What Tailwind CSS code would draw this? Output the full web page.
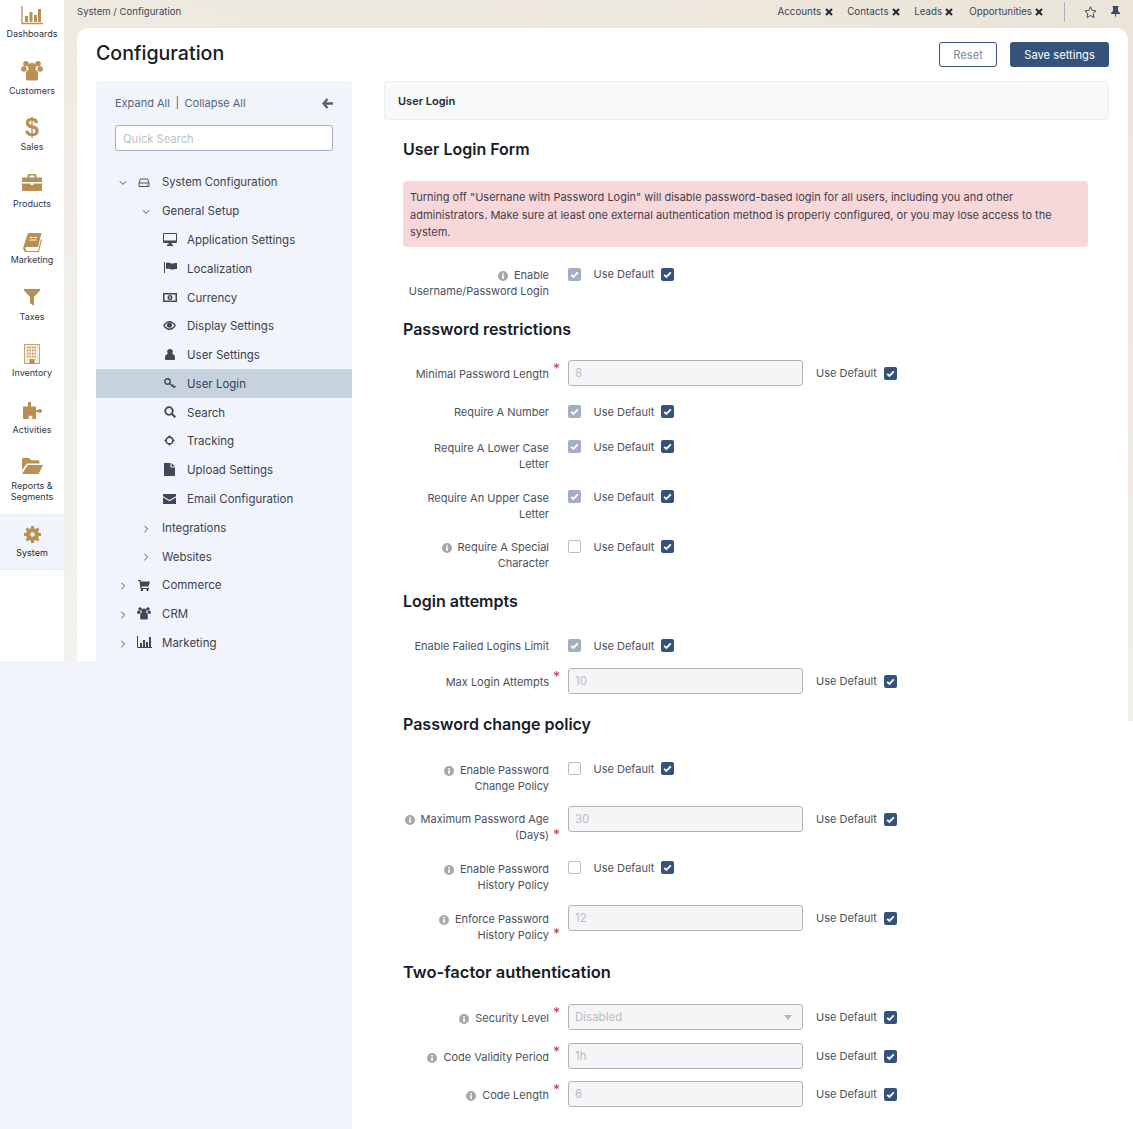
<!DOCTYPE html>
<html lang="en"><head><meta charset="utf-8"><title>Configuration</title>
<script src="https://cdn.jsdelivr.net/npm/@tailwindcss/browser@4"></script></head>
<body>
<svg width="0" height="0" class="absolute">
<symbol id="chk" viewBox="0 0 13 13"><path d="M3.2 6.8l2.2 2.2 4.4-4.6" fill="none" stroke="#fff" stroke-width="1.9"/></symbol>
<symbol id="info" viewBox="0 0 10 10"><circle cx="5" cy="5" r="5" fill="#a8a8a8"/><rect x="4.2" y="4.2" width="1.7" height="3.6" fill="#fff"/><rect x="4.2" y="2" width="1.7" height="1.4" fill="#fff"/></symbol>
<symbol id="x" viewBox="0 0 8 8"><path d="M1 1l6 6M7 1l-6 6" stroke="#222b3a" stroke-width="2.1"/></symbol>
<symbol id="down" viewBox="0 0 8 8"><path d="M.8 2.2L4 5.4l3.2-3.2" fill="none" stroke="#4a5568" stroke-width="1"/></symbol>
<symbol id="right" viewBox="0 0 8 8"><path d="M2.4.8L5.6 4 2.4 7.2" fill="none" stroke="#4a5568" stroke-width="1"/></symbol>
</svg>
<div class="flex w-[1133px] h-[1129px] overflow-hidden bg-[linear-gradient(200deg,#ebe4d8_0%,#f1efe9_45%,#f5f4f1_100%)] font-['Inter','Liberation_Sans',sans-serif] text-[#3d4554]">

<!-- left column -->
<div class="w-[352px] flex flex-col shrink-0">
  <div class="h-[661px] flex">
    <nav class="w-[64px] bg-white flex flex-col items-center text-[9px] leading-[11px] text-[#2f3644] text-center shrink-0">
      <a class="h-[57px] w-full flex flex-col items-center"><span class="h-[28px] flex items-center"><svg class="w-[22px] h-[19px] mt-[2px]" viewBox="0 0 22 19"><path d="M1 0v17.5h21" fill="none" stroke="#b98f52" stroke-width="1.3"/><path d="M4 10h3v6H4zM8.500 6h3v10h-3zM13 9h3v7h-3zM17 3h3v13h-3z" fill="#b98f52"/></svg></span><span>Dashboards</span></a>
      <a class="h-[56px] w-full flex flex-col items-center"><span class="h-[28px] flex items-center"><svg class="w-[22px] h-[20px]" viewBox="0 0 22 20"><g fill="#b98f52"><circle cx="5" cy="2.800" r="2.800"/><circle cx="17" cy="2.800" r="2.800"/><circle cx="2.800" cy="8" r="2.700"/><circle cx="19.200" cy="8" r="2.700"/><circle cx="11" cy="6" r="4"/><path d="M5 12q0-3 3-3h6q3 0 3 3v6q0 1.500-2 1.500H7q-2 0-2-1.500z"/></g></svg></span><span>Customers</span></a>
      <a class="h-[57px] w-full flex flex-col items-center"><span class="h-[28px] flex items-center text-[25px] leading-[26px] font-bold text-[#b98f52] font-['Liberation_Sans',sans-serif]">$</span><span>Sales</span></a>
      <a class="h-[56px] w-full flex flex-col items-center"><span class="h-[28px] flex items-center"><svg class="w-[20px] h-[18px] mb-[2px]" viewBox="0 0 20 18"><path fill="#b98f52" fill-rule="evenodd" d="M6.500 0h7l1 1v2.500H19q1 0 1 1V8H0V4.500q0-1 1-1h4.500V1zM7.500 1.500v2h5v-2zM0 9.500h8.500V11h3V9.500H20V16q0 1-1 1H1q-1 0-1-1z"/></svg></span><span>Products</span></a>
      <a class="h-[57px] w-full flex flex-col items-center"><span class="h-[28px] flex items-center"><svg class="w-[19px] h-[19px] mt-[4px]" viewBox="0 0 19 19"><path fill="#b98f52" d="M5 0h13.500l-3.500 14H3.500q-1.500 0-1 2t2 2H15l3-12 1 1-3.300 12.500H4Q1 19 .2 16 0 15 .5 13.500z"/><path stroke="#fff" stroke-width="1" d="M7 4.500h7M6.500 7h7"/></svg></span><span>Marketing</span></a>
      <a class="h-[56px] w-full flex flex-col items-center"><span class="h-[28px] flex items-center"><svg class="w-[16px] h-[17px]" viewBox="0 0 16 17"><path fill="#b98f52" d="M0 0h16v1.500L10 8v9l-4-3V8L0 1.500z"/></svg></span><span>Taxes</span></a>
      <a class="h-[57px] w-full flex flex-col items-center"><span class="h-[28px] flex items-center"><svg class="w-[16px] h-[20px] mt-[2px]" viewBox="0 0 16 20"><rect x=".5" y=".5" width="15" height="19" fill="#f4ece0" stroke="#c9a573"/><path stroke="#b98f52" stroke-dasharray="1.500 1" stroke-width="1.300" d="M3 3.500h10M3 6.500h10M3 9.500h10M3 12.500h10"/><rect x="5.500" y="15" width="5" height="5" fill="#b98f52"/></svg></span><span>Inventory</span></a>
      <a class="h-[56px] w-full flex flex-col items-center"><span class="h-[28px] flex items-center"><svg class="w-[19px] h-[18px] mt-[2px]" viewBox="0 0 19 18"><path fill="#b98f52" d="M5 0h3v4.500h5V8h2q1-1 2-1 2 0 2 2t-2 2q-1 0-2-1h-2v7H8.500q1-.5 1-2 0-1.500-2-1.500t-2 1.500q0 1.500 1 2H0V4.500h5z"/></svg></span><span>Activities</span></a>
      <a class="h-[62px] w-full flex flex-col items-center"><span class="h-[28px] flex items-center"><svg class="w-[21px] h-[16px]" viewBox="0 0 21 16"><path fill="#b98f52" d="M0 1.500Q0 0 1.500 0H7l2 2.200h7q1.500 0 1.500 1.500V5.500H5L0 12zM5.800 7H21l-4.500 9H0z"/></svg></span><span>Reports &amp;<br>Segments</span></a>
      <a class="h-[56px] w-full bg-[#f1f4fa] border-y border-[#e7eaf0] flex flex-col items-center pt-[4px] text-[#1f2633]"><span class="h-[28px] flex items-center"><svg class="w-[17px] h-[17px] mt-[2px]" viewBox="0 0 17 17"><circle cx="8.500" cy="8.500" r="4.500" fill="none" stroke="#b98f52" stroke-width="4"/><path stroke="#b98f52" stroke-width="3" d="M8.500 0v17M0 8.500h17M2.500 2.500l12 12M14.500 2.500l-12 12"/><circle cx="8.500" cy="8.500" r="2.300" fill="#f1f4fa"/></svg></span><span>System</span></a>
    </nav>
    <div class="flex-1 flex flex-col min-w-0">
      <div class="h-[28px] pl-[13px] flex items-center text-[9.600px] pb-[4px] text-[#3d4554]">System / Configuration</div>
      <div class="flex-1 ml-[13px] bg-white rounded-tl-xl flex flex-col">
        <h1 class="h-[53px] pl-[19px] pt-[10px] text-[19.600px] leading-[30px] font-medium text-[#161c28]">Configuration</h1>
        <aside class="ml-[19px] flex-1 bg-[#f1f4fa] rounded-t-[3px] flex flex-col">
          <div class="h-[44px] pl-[19px] pr-[19px] flex items-center text-[11px] pt-[1px] text-[#59637a]">
            <span>Expand All</span><span class="mx-[5.500px] text-[#59637a]">|</span><span>Collapse All</span>
            <svg class="ml-auto w-[11px] h-[11px]" viewBox="0 0 11 11"><path d="M5.500 1L1.500 5.500l4 4.500M2 5.500h9" fill="none" stroke="#565f73" stroke-width="2.300"/></svg>
          </div>
          <div class="mx-[19px] h-[26px] bg-white border border-[#a9aec6] rounded-[3px] px-[7px] pt-[2px] flex items-center text-[11.200px] text-[#bcbfca]">Quick Search</div>
          <ul class="mt-[16.800px] text-[11.500px] text-[#3a4252]">
            <li class="h-[28.800px] pt-[1.500px] flex items-center"><svg class="ml-[23px] w-[8px] h-[8px]" viewBox="0 0 8 8"><use href="#down"/></svg><svg class="ml-[11px] w-[12px] h-[10px]" viewBox="0 0 12 10"><path d="M2.500 1h7L11 5v3.500H1V5zM1 5h10M8.500 7h1" fill="none" stroke="#4a5568"/></svg><span class="ml-[12px] text-[11.300px]">System Configuration</span></li>
            <li class="h-[28.800px] pt-[1.500px] flex items-center"><svg class="ml-[46px] w-[8px] h-[8px]" viewBox="0 0 8 8"><use href="#down"/></svg><span class="ml-[12px]">General Setup</span></li>
            <li class="h-[28.800px] pt-[1.500px] flex items-center"><svg class="ml-[67px] w-[14px] h-[13px] mb-[2px]" viewBox="0 0 14 13"><path fill="#3f4858" d="M0 1q0-1 1-1h12q1 0 1 1v8q0 1-1 1H8.500v1.500H10V13H4v-1.500h1.500V10H1q-1 0-1-1z"/><path fill="#f1f4fa" d="M1 1h12v6.500H1z"/></svg><span class="ml-[10px]">Application Settings</span></li>
            <li class="h-[28.800px] pt-[1.500px] flex items-center"><svg class="ml-[68px] w-[13px] h-[11px] mb-[3px]" viewBox="0 0 13 11"><path fill="#3f4858" d="M0 0h1v11H0zM2 1q2-1 4 0t5 0h2v6h-2q-3 1-5 0t-4 0z"/></svg><span class="ml-[10px]">Localization</span></li>
            <li class="h-[28.800px] pt-[1.500px] flex items-center"><svg class="ml-[67px] w-[14px] h-[9px] mb-[2px]" viewBox="0 0 14 9"><path fill="#3f4858" fill-rule="evenodd" d="M0 0h14v9H0zM1.500 1.500v6h11v-6z"/><circle cx="7" cy="4.500" r="2.500" fill="#3f4858"/><path stroke="#fff" d="M7 3v3"/></svg><span class="ml-[10px]">Currency</span></li>
            <li class="h-[28.800px] pt-[1.500px] flex items-center"><svg class="ml-[67px] w-[13px] h-[9px] mb-[2px]" viewBox="0 0 13 9"><path fill="#3f4858" d="M0 4.500Q3 0 6.500 0T13 4.500Q10 9 6.500 9T0 4.500z"/><path fill="#f1f4fa" d="M1.500 4.500Q4 1.500 6.500 1.500t5 3q-2.500 3-5 3t-5-3z"/><circle cx="6.500" cy="4.300" r="2.500" fill="#3f4858"/></svg><span class="ml-[11px]">Display Settings</span></li>
            <li class="h-[28.800px] pt-[1.500px] flex items-center"><svg class="ml-[69px] w-[10px] h-[11px] mb-[2px]" viewBox="0 0 10 11"><circle cx="5" cy="2.800" r="2.800" fill="#3f4858"/><path fill="#3f4858" d="M0 8.500Q0 5.500 2.500 5h5Q10 5.500 10 8.500V10q0 1-1 1H1q-1 0-1-1z"/></svg><span class="ml-[12px]">User Settings</span></li>
            <li class="h-[28.800px] pt-[1.500px] flex items-center bg-[#c6d2e0]"><svg class="ml-[68px] w-[12px] h-[11px] mb-[2px]" viewBox="0 0 12 11"><circle cx="3.500" cy="3.500" r="2.700" fill="none" stroke="#3f4858" stroke-width="1.400"/><path d="M5.500 5.500L10 9.500M8 8l1.500-1.500M10 9.500l1.500-1.500" fill="none" stroke="#3f4858" stroke-width="1.300"/></svg><span class="ml-[11px]">User Login</span></li>
            <li class="h-[28.800px] pt-[1.500px] flex items-center"><svg class="ml-[68px] w-[12px] h-[12px] mb-[2px]" viewBox="0 0 12 12"><circle cx="5" cy="5" r="3.800" fill="none" stroke="#3f4858" stroke-width="1.800"/><path d="M8 8l3.300 3.300" stroke="#3f4858" stroke-width="2"/></svg><span class="ml-[11px]">Search</span></li>
            <li class="h-[28.800px] pt-[1.500px] flex items-center"><svg class="ml-[68px] w-[11px] h-[11px] mb-[3px]" viewBox="0 0 11 11"><circle cx="5.500" cy="5.500" r="3.300" fill="none" stroke="#3f4858" stroke-width="1.400"/><path d="M5.500 0l1.700 2.500H3.800zM5.500 11l1.700-2.500H3.800zM0 5.500l2.500-1.700v3.400zM11 5.500L8.500 3.800v3.400z" fill="#3f4858"/></svg><span class="ml-[12px]">Tracking</span></li>
            <li class="h-[28.800px] pt-[1.500px] flex items-center"><svg class="ml-[68px] w-[11px] h-[13px] mb-[3px]" viewBox="0 0 11 13"><path fill="#3f4858" d="M0 0h6.500v4.500H11V13H0zM7.500 0L11 3.500H7.500z"/></svg><span class="ml-[12px]">Upload Settings</span></li>
            <li class="h-[28.800px] pt-[1.500px] flex items-center"><svg class="ml-[67px] w-[13px] h-[10px] mb-[2px]" viewBox="0 0 13 10"><path fill="#3f4858" d="M0 0h13v2.200L6.500 6 0 2.200zM0 3.500l6.500 3.800L13 3.500V10H0z"/></svg><span class="ml-[11px]">Email Configuration</span></li>
            <li class="h-[28.800px] pt-[1.500px] flex items-center"><svg class="ml-[46px] w-[8px] h-[8px]" viewBox="0 0 8 8"><use href="#right"/></svg><span class="ml-[12px]">Integrations</span></li>
            <li class="h-[28.800px] pt-[1.500px] flex items-center"><svg class="ml-[46px] w-[8px] h-[8px]" viewBox="0 0 8 8"><use href="#right"/></svg><span class="ml-[12px]">Websites</span></li>
            <li class="h-[28.800px] pt-[1.500px] flex items-center"><svg class="ml-[23px] w-[8px] h-[8px]" viewBox="0 0 8 8"><use href="#right"/></svg><svg class="ml-[11px] w-[12px] h-[11px] mb-[2px]" viewBox="0 0 12 11"><path fill="#3f4858" d="M0 0h2.500l.5 1.500h9L10.500 6.500H3.500l.3 1.500H11v1H2.500L1.500 1H0z"/><circle cx="4" cy="10" r="1"/><circle cx="9.500" cy="10" r="1"/></svg><span class="ml-[12px]">Commerce</span></li>
            <li class="h-[28.800px] pt-[1.500px] flex items-center"><svg class="ml-[23px] w-[8px] h-[8px]" viewBox="0 0 8 8"><use href="#right"/></svg><svg class="ml-[10px] w-[14px] h-[13px] mb-[2px]" viewBox="0 0 22 20"><g fill="#3f4858"><circle cx="5" cy="2.800" r="2.800"/><circle cx="17" cy="2.800" r="2.800"/><circle cx="2.800" cy="8" r="2.700"/><circle cx="19.200" cy="8" r="2.700"/><circle cx="11" cy="6" r="4"/><path d="M5 12q0-3 3-3h6q3 0 3 3v6q0 1.500-2 1.500H7q-2 0-2-1.500z"/></g></svg><span class="ml-[11px]">CRM</span></li>
            <li class="h-[28.800px] pt-[1.500px] flex items-center"><svg class="ml-[23px] w-[8px] h-[8px]" viewBox="0 0 8 8"><use href="#right"/></svg><svg class="ml-[10px] w-[15px] h-[12px] mb-[3px]" viewBox="0 0 15 12"><path d="M.5 0v11.500H15" fill="none" stroke="#3f4858"/><path d="M3 7h2v4H3zM6 4h2v7H6zM9 6h2v5H9zM12 1h2v10h-2z" fill="#3f4858"/></svg><span class="ml-[10px]">Marketing</span></li>
          </ul>
        </aside>
      </div>
    </div>
  </div>
  <div class="flex-1 bg-[#f1f4fa]"></div>
</div>

<!-- right column -->
<div class="flex-1 flex flex-col min-w-0">
  <header class="h-[28px] shrink-0 flex items-center justify-end pb-[4px] text-[9.800px] text-[#3d4554]">
    <span>Accounts</span><svg class="ml-[4px] w-[8px] h-[8px]" viewBox="0 0 8 8"><use href="#x"/></svg>
    <span class="ml-[14px]">Contacts</span><svg class="ml-[3px] w-[8px] h-[8px]" viewBox="0 0 8 8"><use href="#x"/></svg>
    <span class="ml-[14.500px]">Leads</span><svg class="ml-[3px] w-[8px] h-[8px]" viewBox="0 0 8 8"><use href="#x"/></svg>
    <span class="ml-[16px]">Opportunities</span><svg class="ml-[3px] w-[8px] h-[8px]" viewBox="0 0 8 8"><use href="#x"/></svg>
    <span class="ml-[21px] w-px h-[20px] bg-[#a9b0bd]"></span>
    <svg class="ml-[19px] w-[13px] h-[12px]" viewBox="0 0 13 12"><path d="M6.500.8l1.700 3.600 3.900.5-2.900 2.700.8 3.900-3.500-2-3.500 2 .8-3.900L.9 4.900l3.900-.5z" fill="none" stroke="#3a4b66"/></svg>
    <svg class="ml-[14px] mr-[13px] w-[9px] h-[12px]" viewBox="0 0 9 12"><path fill="#3a4b66" d="M1.500 0h6v1L7 1.500V5l2 2v1H5.200L4.500 12l-.7-4H0V7l2-2V1.500L1.500 1z"/></svg>
  </header>
  <div class="flex-1 flex min-h-0">
    <main class="flex-1 bg-white rounded-tr-xl flex flex-col">
      <div class="pt-[14px] pr-[19px] flex justify-end gap-[13px] text-[11.200px]">
        <button class="w-[58px] h-[25px] pt-px border border-[#34527a] rounded-[3px] bg-white text-[#7a8aa0]">Reset</button>
        <button class="w-[99px] h-[25px] pt-px rounded-[3px] bg-[#34527a] text-white">Save settings</button>
      </div>
      <div class="mt-[14px] ml-[32px] mr-[19px] h-[39px] pt-px bg-[#f8f9fb] border border-[#eceef2] rounded-[3px] pl-[13px] flex items-center text-[11px] font-semibold text-[#222936]">User Login</div>
      <div class="ml-[51px] mr-[40px] text-[11px] leading-[16px] text-[#4a5160]">
        <h2 class="mt-[15px] h-[28px] text-[16px] leading-[28px] font-semibold text-[#161c28]">User Login Form</h2>
        <div class="mt-[18px] h-[66px] bg-[#f8d7da] border border-[#f3dfe1] rounded-[3px] px-[6px] pt-[7px] text-[11px] leading-[17.500px] text-[#44404a] whitespace-nowrap">Turning off "Usernane with Password Login" will disable password-based login for all users, including you and other<br>administrators. Make sure at least one external authentication method is properly configured, or you may lose access to the<br>system.</div>

        <div class="mt-[20px] flex items-start"><div class="w-[146px] text-right whitespace-nowrap"><svg class="inline w-[10px] h-[10px] mr-[6px]" viewBox="0 0 10 10"><use href="#info"/></svg>Enable<br>Username/Password Login</div><div class="ml-[19px] mt-px w-[13px] h-[13px] rounded-[2px] bg-[#a3aec0]"><svg viewBox="0 0 13 13"><use href="#chk"/></svg></div><span class="ml-[12.500px] -mt-px w-[67.500px]">Use Default</span><div class="mt-px w-[13px] h-[13px] rounded-[2px] bg-[#34527a]"><svg viewBox="0 0 13 13"><use href="#chk"/></svg></div></div>

        <h2 class="mt-[16px] h-[28px] text-[16px] leading-[28px] font-semibold text-[#161c28]">Password restrictions</h2>

        <div class="mt-[17px] flex items-start"><div class="w-[146px] pt-[6px] text-right whitespace-nowrap">Minimal Password Length</div><span class="w-[19px] pl-[4px] text-[#b5474f] text-[14px] leading-[18px]">*</span><div class="w-[235px] h-[26px] bg-[#f5f5f7] border border-[#b0b3bb] rounded-[3px] px-[6px] text-[11.500px] leading-[24px] text-[#bbbdc3]">8</div><span class="ml-[13px] w-[68px] mt-[5px]">Use Default</span><div class="mt-[7px] w-[13px] h-[13px] rounded-[2px] bg-[#34527a]"><svg viewBox="0 0 13 13"><use href="#chk"/></svg></div></div>

        <div class="mt-[18px] flex items-start"><div class="w-[146px] text-right whitespace-nowrap">Require A Number</div><div class="ml-[19px] mt-px w-[13px] h-[13px] rounded-[2px] bg-[#a3aec0]"><svg viewBox="0 0 13 13"><use href="#chk"/></svg></div><span class="ml-[12.500px] w-[67.500px]">Use Default</span><div class="mt-px w-[13px] h-[13px] rounded-[2px] bg-[#34527a]"><svg viewBox="0 0 13 13"><use href="#chk"/></svg></div></div>

        <div class="mt-[20px] flex items-start"><div class="w-[146px] text-right whitespace-nowrap">Require A Lower Case<br>Letter</div><div class="ml-[19px] w-[13px] h-[13px] rounded-[2px] bg-[#a3aec0]"><svg viewBox="0 0 13 13"><use href="#chk"/></svg></div><span class="ml-[12.500px] -mt-px w-[67.500px]">Use Default</span><div class="w-[13px] h-[13px] rounded-[2px] bg-[#34527a]"><svg viewBox="0 0 13 13"><use href="#chk"/></svg></div></div>

        <div class="mt-[18px] flex items-start"><div class="w-[146px] text-right whitespace-nowrap">Require An Upper Case<br>Letter</div><div class="ml-[19px] w-[13px] h-[13px] rounded-[2px] bg-[#a3aec0]"><svg viewBox="0 0 13 13"><use href="#chk"/></svg></div><span class="ml-[12.500px] -mt-px w-[67.500px]">Use Default</span><div class="w-[13px] h-[13px] rounded-[2px] bg-[#34527a]"><svg viewBox="0 0 13 13"><use href="#chk"/></svg></div></div>

        <div class="mt-[17px] flex items-start"><div class="w-[146px] text-right whitespace-nowrap"><svg class="inline w-[10px] h-[10px] mr-[6px]" viewBox="0 0 10 10"><use href="#info"/></svg>Require A Special<br>Character</div><div class="ml-[19px] mt-px w-[13px] h-[13px] rounded-[2px] bg-white border border-[#bdbdbd]"></div><span class="ml-[12.500px] w-[67.500px]">Use Default</span><div class="mt-px w-[13px] h-[13px] rounded-[2px] bg-[#34527a]"><svg viewBox="0 0 13 13"><use href="#chk"/></svg></div></div>

        <h2 class="mt-[16px] h-[28px] text-[16px] leading-[28px] font-semibold text-[#161c28]">Login attempts</h2>

        <div class="mt-[23px] flex items-start"><div class="w-[146px] text-right whitespace-nowrap">Enable Failed Logins Limit</div><div class="ml-[19px] mt-px w-[13px] h-[13px] rounded-[2px] bg-[#a3aec0]"><svg viewBox="0 0 13 13"><use href="#chk"/></svg></div><span class="ml-[12.500px] w-[67.500px]">Use Default</span><div class="mt-px w-[13px] h-[13px] rounded-[2px] bg-[#34527a]"><svg viewBox="0 0 13 13"><use href="#chk"/></svg></div></div>

        <div class="mt-[14px] flex items-start"><div class="w-[146px] pt-[6px] text-right whitespace-nowrap">Max Login Attempts</div><span class="w-[19px] pl-[4px] text-[#b5474f] text-[14px] leading-[18px]">*</span><div class="w-[235px] h-[26px] bg-[#f5f5f7] border border-[#b0b3bb] rounded-[3px] px-[6px] text-[11.500px] leading-[24px] text-[#bbbdc3]">10</div><span class="ml-[13px] w-[68px] mt-[5px]">Use Default</span><div class="mt-[7px] w-[13px] h-[13px] rounded-[2px] bg-[#34527a]"><svg viewBox="0 0 13 13"><use href="#chk"/></svg></div></div>

        <h2 class="mt-[16px] h-[28px] text-[16px] leading-[28px] font-semibold text-[#161c28]">Password change policy</h2>

        <div class="mt-[24px] flex items-start"><div class="w-[146px] text-right whitespace-nowrap"><svg class="inline w-[10px] h-[10px] mr-[6px]" viewBox="0 0 10 10"><use href="#info"/></svg>Enable Password<br>Change Policy</div><div class="ml-[19px] w-[13px] h-[13px] rounded-[2px] bg-white border border-[#bdbdbd]"></div><span class="ml-[12.500px] -mt-px w-[67.500px]">Use Default</span><div class="w-[13px] h-[13px] rounded-[2px] bg-[#34527a]"><svg viewBox="0 0 13 13"><use href="#chk"/></svg></div></div>

        <div class="mt-[12px] flex items-start"><div class="w-[146px] pt-[5px] text-right whitespace-nowrap"><svg class="inline w-[10px] h-[10px] mr-[6px]" viewBox="0 0 10 10"><use href="#info"/></svg>Maximum Password Age<br>(Days)</div><span class="w-[19px] pl-[4px] pt-[20px] text-[#b5474f] text-[14px] leading-[18px]">*</span><div class="w-[235px] h-[26px] bg-[#f5f5f7] border border-[#b0b3bb] rounded-[3px] px-[6px] text-[11.500px] leading-[24px] text-[#bbbdc3]">30</div><span class="ml-[13px] w-[68px] mt-[5px]">Use Default</span><div class="mt-[7px] w-[13px] h-[13px] rounded-[2px] bg-[#34527a]"><svg viewBox="0 0 13 13"><use href="#chk"/></svg></div></div>

        <div class="mt-[17px] flex items-start"><div class="w-[146px] text-right whitespace-nowrap"><svg class="inline w-[10px] h-[10px] mr-[6px]" viewBox="0 0 10 10"><use href="#info"/></svg>Enable Password<br>History Policy</div><div class="ml-[19px] w-[13px] h-[13px] rounded-[2px] bg-white border border-[#bdbdbd]"></div><span class="ml-[12.500px] -mt-px w-[67.500px]">Use Default</span><div class="w-[13px] h-[13px] rounded-[2px] bg-[#34527a]"><svg viewBox="0 0 13 13"><use href="#chk"/></svg></div></div>

        <div class="mt-[12px] flex items-start"><div class="w-[146px] pt-[6px] text-right whitespace-nowrap"><svg class="inline w-[10px] h-[10px] mr-[6px]" viewBox="0 0 10 10"><use href="#info"/></svg>Enforce Password<br>History Policy</div><span class="w-[19px] pl-[4px] pt-[20px] text-[#b5474f] text-[14px] leading-[18px]">*</span><div class="w-[235px] h-[26px] bg-[#f5f5f7] border border-[#b0b3bb] rounded-[3px] px-[6px] text-[11.500px] leading-[24px] text-[#bbbdc3]">12</div><span class="ml-[13px] w-[68px] mt-[5px]">Use Default</span><div class="mt-[7px] w-[13px] h-[13px] rounded-[2px] bg-[#34527a]"><svg viewBox="0 0 13 13"><use href="#chk"/></svg></div></div>

        <h2 class="mt-[15px] h-[28px] text-[16.500px] leading-[28px] font-semibold text-[#161c28]">Two-factor authentication</h2>

        <div class="mt-[18px] flex items-start"><div class="w-[146px] pt-[6px] text-right whitespace-nowrap"><svg class="inline w-[10px] h-[10px] mr-[6px]" viewBox="0 0 10 10"><use href="#info"/></svg>Security Level</div><span class="w-[19px] pl-[4px] text-[#b5474f] text-[14px] leading-[18px]">*</span><div class="w-[235px] h-[26px] bg-[#f5f5f7] border border-[#b0b3bb] rounded-[3px] px-[6px] text-[11.500px] leading-[24px] text-[#bbbdc3] flex justify-between items-center">Disabled<span class="w-0 h-0 border-x-[4px] border-x-transparent border-t-[5px] border-t-[#b4b6bc] mr-[4px]"></span></div><span class="ml-[13px] w-[68px] mt-[5px]">Use Default</span><div class="mt-[7px] w-[13px] h-[13px] rounded-[2px] bg-[#34527a]"><svg viewBox="0 0 13 13"><use href="#chk"/></svg></div></div>

        <div class="mt-[13px] flex items-start"><div class="w-[146px] pt-[6px] text-right whitespace-nowrap"><svg class="inline w-[10px] h-[10px] mr-[6px]" viewBox="0 0 10 10"><use href="#info"/></svg>Code Validity Period</div><span class="w-[19px] pl-[4px] text-[#b5474f] text-[14px] leading-[18px]">*</span><div class="w-[235px] h-[26px] bg-[#f5f5f7] border border-[#b0b3bb] rounded-[3px] px-[6px] text-[11.500px] leading-[24px] text-[#bbbdc3]">1h</div><span class="ml-[13px] w-[68px] mt-[5px]">Use Default</span><div class="mt-[7px] w-[13px] h-[13px] rounded-[2px] bg-[#34527a]"><svg viewBox="0 0 13 13"><use href="#chk"/></svg></div></div>

        <div class="mt-[12px] flex items-start"><div class="w-[146px] pt-[6px] text-right whitespace-nowrap"><svg class="inline w-[10px] h-[10px] mr-[6px]" viewBox="0 0 10 10"><use href="#info"/></svg>Code Length</div><span class="w-[19px] pl-[4px] text-[#b5474f] text-[14px] leading-[18px]">*</span><div class="w-[235px] h-[26px] bg-[#f5f5f7] border border-[#b0b3bb] rounded-[3px] px-[6px] text-[11.500px] leading-[24px] text-[#bbbdc3]">6</div><span class="ml-[13px] w-[68px] mt-[5px]">Use Default</span><div class="mt-[7px] w-[13px] h-[13px] rounded-[2px] bg-[#34527a]"><svg viewBox="0 0 13 13"><use href="#chk"/></svg></div></div>
      </div>
    </main>
    <div class="w-[5px] shrink-0 flex flex-col"><div class="h-[693px]"></div><div class="flex-1 bg-white"></div></div>
  </div>
</div>
</div>
</body></html>
